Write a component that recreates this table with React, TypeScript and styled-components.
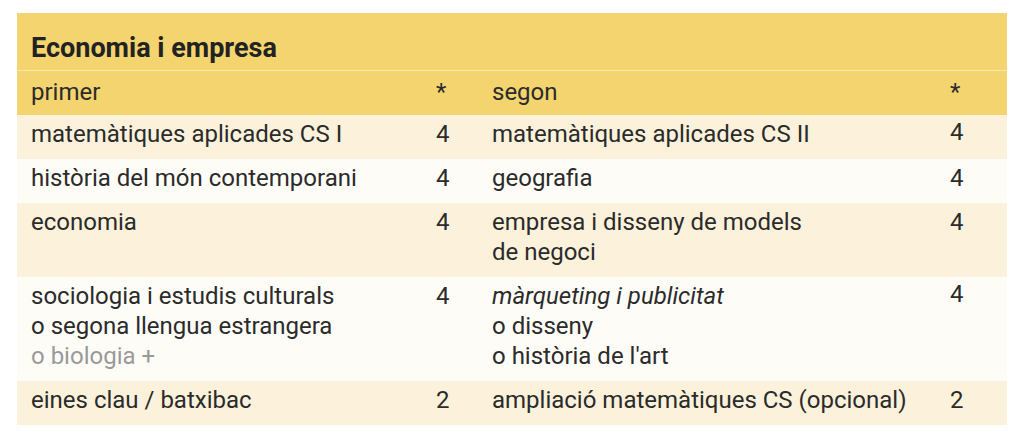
import { createGlobalStyle } from "styled-components"
import styled from "styled-components"

const GlobalStyle = createGlobalStyle`
  body {
    margin: 0;
    background: #ffffff;
    font-family: Roboto, "Liberation Sans", Arial, sans-serif;
    color: #2b2b2b;
  }
`

const Page = styled.div`
  padding: 13px 17px;
`

const Table = styled.div`
  width: 990px;
  display: flex;
  flex-direction: column;
`

const Title = styled.h2`
  margin: 0;
  height: 58px;
  box-sizing: border-box;
  padding: 19.5px 14px 0;
  background: #f3d46f;
  font-size: 27px;
  line-height: 30px;
  font-weight: 700;
  color: #222222;
  border-bottom: 1px solid #f8e7b0;
`

const Row = styled.div<{ tone: "head" | "cream" | "light" }>`
  display: grid;
  grid-template-columns: 405px 56px 458px 71px;
  background: ${({ tone }) =>
    tone === "head" ? "#f3d46f" : tone === "cream" ? "#fcf2db" : "#fefcf7"};
  font-size: 24px;
  line-height: 30px;
  box-sizing: border-box;
  min-height: 44px;
`

const Cell = styled.div<{ head?: boolean; lift?: boolean }>`
  padding: ${({ head, lift }) => (head ? "5.5px" : lift ? "1.5px" : "3.5px")} 14px
    ${({ head }) => (head ? "8.5px" : "10.5px")};
`

const Muted = styled.span`
  color: #9a9a9a;
`

const Line = styled.div``

type Subject = { text: React.ReactNode; credits: string; lift?: boolean }
type RowData = { left: Subject; right: Subject }

const rows: RowData[] = [
  {
    left: { text: "matemàtiques aplicades CS I", credits: "4" },
    right: { text: "matemàtiques aplicades CS II", credits: "4", lift: true }
  },
  {
    left: { text: "història del món contemporani", credits: "4" },
    right: { text: "geografia", credits: "4" }
  },
  {
    left: { text: "economia", credits: "4" },
    right: {
      text: (
        <>
          <Line>empresa i disseny de models</Line>
          <Line>de negoci</Line>
        </>
      ),
      credits: "4"
    }
  },
  {
    left: {
      text: (
        <>
          <Line>sociologia i estudis culturals</Line>
          <Line>o segona llengua estrangera</Line>
          <Line>
            <Muted>o biologia +</Muted>
          </Line>
        </>
      ),
      credits: "4"
    },
    right: {
      text: (
        <>
          <Line>
            <em>màrqueting i publicitat</em>
          </Line>
          <Line>o disseny</Line>
          <Line>o història de l'art</Line>
        </>
      ),
      credits: "4",
      lift: true
    }
  },
  {
    left: { text: "eines clau / batxibac", credits: "2" },
    right: { text: "ampliació matemàtiques CS (opcional)", credits: "2" }
  }
]

export default function App() {
  return (
    <Page>
      <GlobalStyle />
      <Table>
        <Title>Economia i empresa</Title>
        <Row tone="head">
          <Cell head>primer</Cell>
          <Cell head>*</Cell>
          <Cell head>segon</Cell>
          <Cell head>*</Cell>
        </Row>
        {rows.map((r, i) => (
          <Row key={i} tone={i % 2 === 0 ? "cream" : "light"}>
            <Cell>{r.left.text}</Cell>
            <Cell lift={r.left.lift}>{r.left.credits}</Cell>
            <Cell>{r.right.text}</Cell>
            <Cell lift={r.right.lift}>{r.right.credits}</Cell>
          </Row>
        ))}
      </Table>
    </Page>
  )
}
